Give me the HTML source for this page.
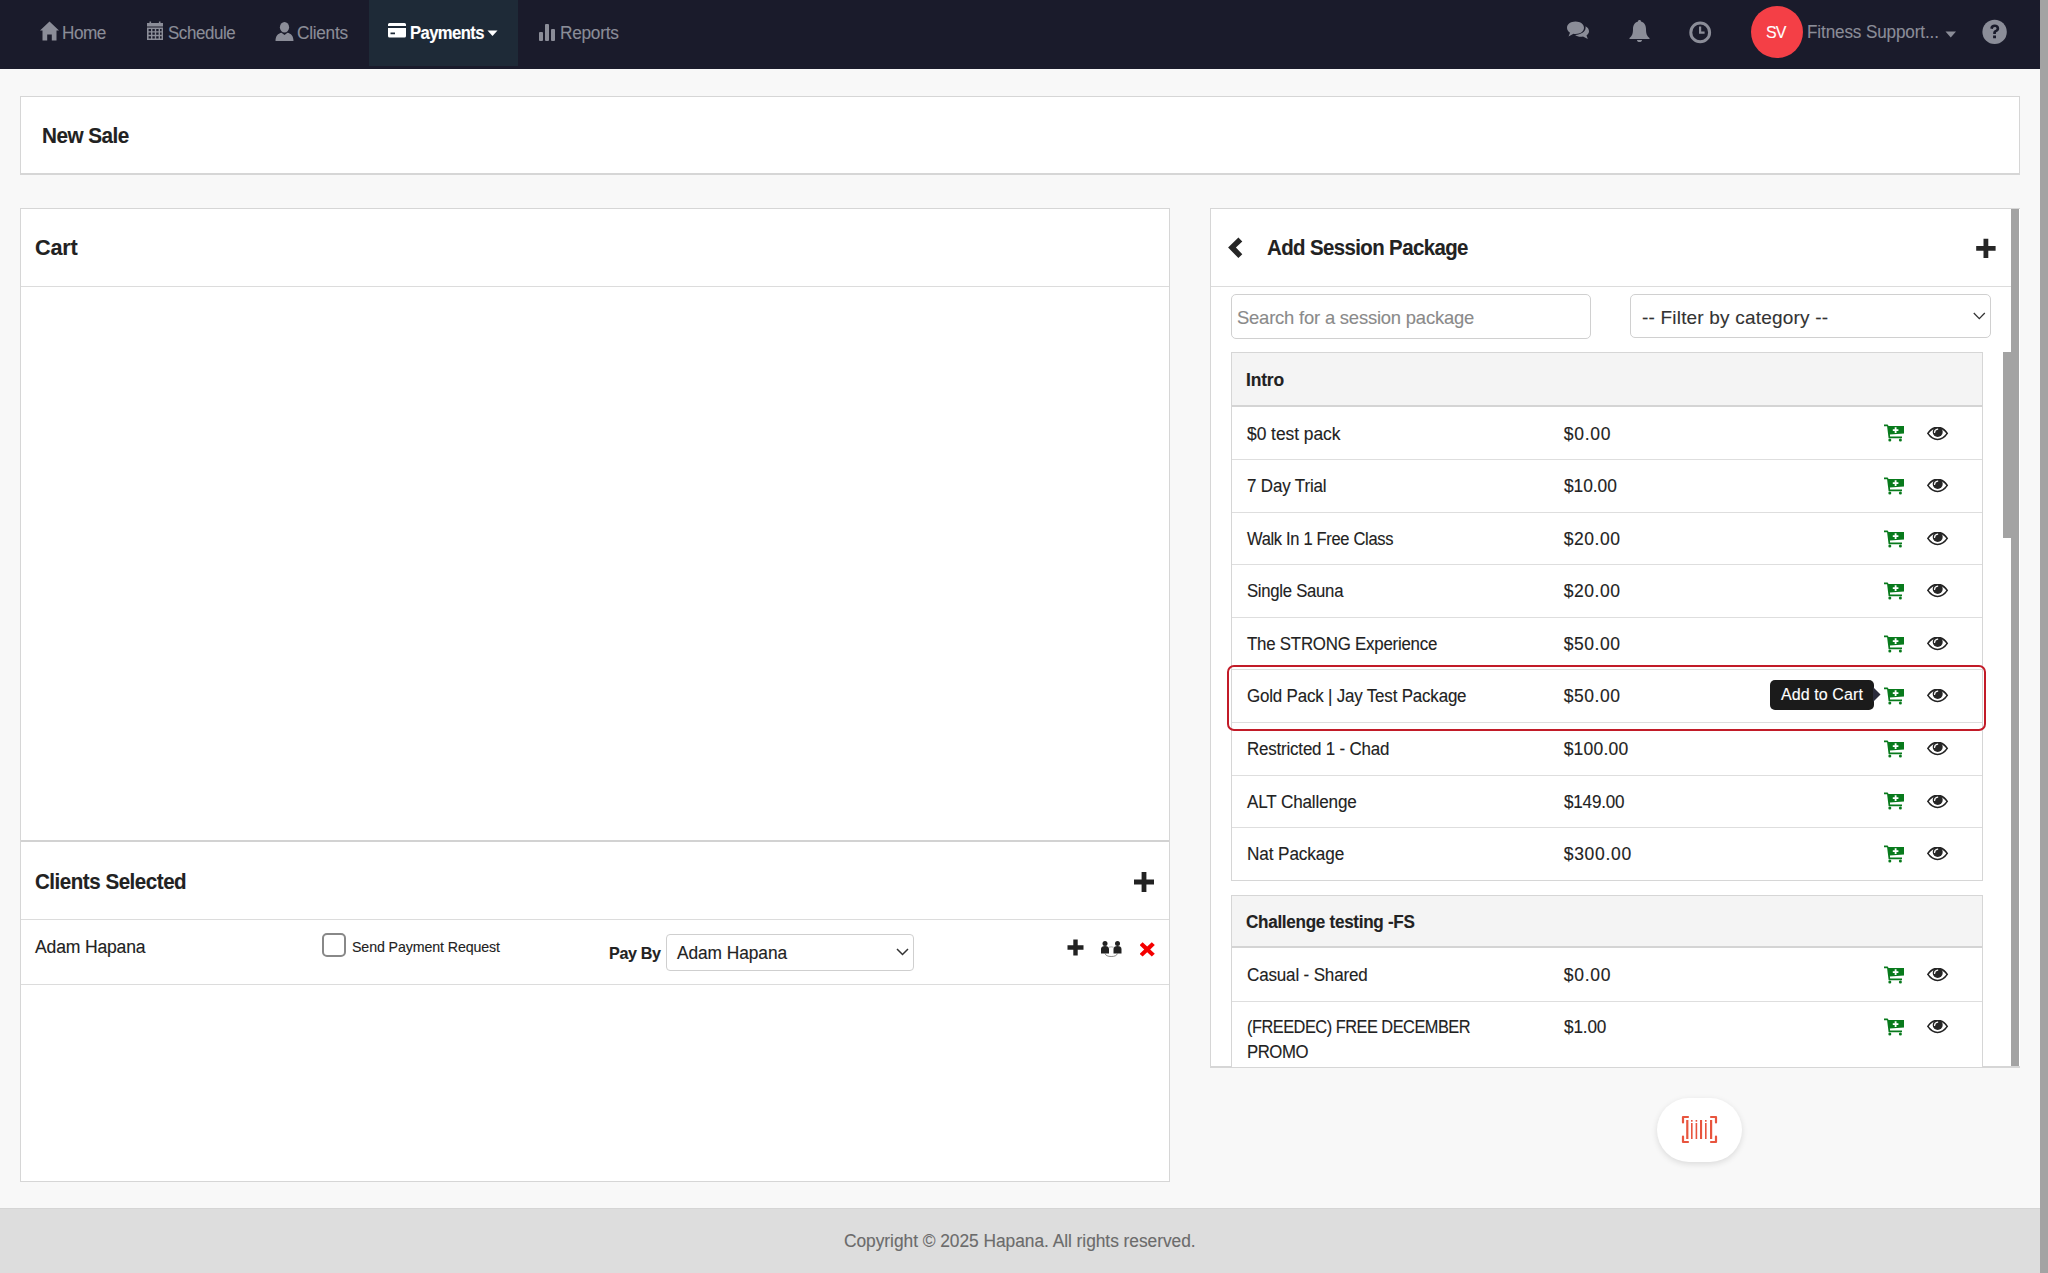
<!DOCTYPE html>
<html><head><meta charset="utf-8">
<style>
*{box-sizing:border-box;margin:0;padding:0}
html,body{width:2048px;height:1273px;overflow:hidden;background:#f8f8f8;font-family:"Liberation Sans",sans-serif;color:#222;position:relative}
.b{position:absolute;display:block}
.t{position:absolute;white-space:nowrap;transform-origin:0 0;-webkit-text-stroke:0.12px currentColor}
</style></head><body>
<div class="b" style="left:0;top:0;width:2040px;height:69px;background:#1a1b2b"></div>
<div class="b" style="left:369px;top:0;width:149px;height:66px;background:#1e2a37"></div>
<svg class="b" style="left:40px;top:21px;" width="19" height="20" viewBox="0 0 19 20"><path d="M9.5 0.5 L19 9.5 L16.5 9.5 L16.5 19.5 L11.8 19.5 L11.8 13.5 L7.2 13.5 L7.2 19.5 L2.5 19.5 L2.5 9.5 L0 9.5 Z" fill="#8b8d98"/></svg>
<div class="t" style="left:61.60px;top:22.60px;font-size:18.00px;line-height:20px;color:#8b8d98;letter-spacing:-0.491px;transform:scaleX(0.9543)">Home</div>
<svg class="b" style="left:146px;top:21px;" width="18" height="20" viewBox="0 0 18 20"><rect x="1" y="2" width="16" height="3.5" fill="#8b8d98"/><rect x="3.5" y="0.5" width="1.6" height="3" fill="#8b8d98"/><rect x="12.9" y="0.5" width="1.6" height="3" fill="#8b8d98"/><path d="M1 6.5 H17 V19 H1 Z M2.6 8 v2.2 h2.4 v-2.2 z M6.4 8 v2.2 h2.4 v-2.2 z M10.2 8 v2.2 h2.4 v-2.2 z M14 8 v2.2 h1.6 v-2.2 z M2.6 11.6 v2.2 h2.4 v-2.2 z M6.4 11.6 v2.2 h2.4 v-2.2 z M10.2 11.6 v2.2 h2.4 v-2.2 z M14 11.6 v2.2 h1.6 v-2.2 z M2.6 15.2 v2.2 h2.4 v-2.2 z M6.4 15.2 v2.2 h2.4 v-2.2 z M10.2 15.2 v2.2 h2.4 v-2.2 z M14 15.2 v2.2 h1.6 v-2.2 z" fill="#8b8d98" fill-rule="evenodd"/></svg>
<div class="t" style="left:168.00px;top:22.60px;font-size:18.00px;line-height:20px;color:#8b8d98;letter-spacing:-0.436px;transform:scaleX(0.9397)">Schedule</div>
<svg class="b" style="left:275px;top:22px;" width="19" height="19" viewBox="0 0 19 19"><ellipse cx="9.5" cy="5.2" rx="4.6" ry="5.2" fill="#8b8d98"/><path d="M0.5 19 C0.5 14 3 11.5 6.5 10.8 L9.5 13 L12.5 10.8 C16 11.5 18.5 14 18.5 19 Z" fill="#8b8d98"/></svg>
<div class="t" style="left:297.00px;top:22.60px;font-size:18.00px;line-height:20px;color:#8b8d98;letter-spacing:-0.273px;transform:scaleX(0.9557)">Clients</div>
<svg class="b" style="left:388px;top:23px;" width="18" height="15" viewBox="0 0 18 15"><path d="M0 1.5 Q0 0 1.5 0 H16.5 Q18 0 18 1.5 V13 Q18 14.5 16.5 14.5 H1.5 Q0 14.5 0 13 Z M0 3 V5 H18 V3 Z M2.5 9.5 V11.2 H7 V9.5 Z" fill="#fff" fill-rule="evenodd"/></svg>
<div class="t" style="left:410.00px;top:22.60px;font-size:18.00px;line-height:20px;color:#fff;font-weight:bold;letter-spacing:-0.624px;transform:scaleX(0.9239)">Payments</div>
<svg class="b" style="left:487px;top:30px;" width="11" height="7" viewBox="0 0 11 7"><path d="M0.5 0.5 H10.5 L5.5 6 Z" fill="#fff"/></svg>
<svg class="b" style="left:538px;top:23px;" width="18" height="18" viewBox="0 0 18 18"><rect x="1" y="9" width="4" height="9" rx="1" fill="#8b8d98"/><rect x="7" y="1" width="4" height="17" rx="1" fill="#8b8d98"/><rect x="13" y="6" width="4" height="12" rx="1" fill="#8b8d98"/></svg>
<div class="t" style="left:559.60px;top:22.60px;font-size:18.00px;line-height:20px;color:#8b8d98;letter-spacing:-0.286px;transform:scaleX(0.9594)">Reports</div>
<svg class="b" style="left:1566px;top:20px;" width="25" height="21" viewBox="0 0 25 21"><path d="M9.5 1.5 C4.5 1.5 1 4.3 1 7.8 C1 9.9 2.2 11.6 4 12.7 L2.5 16.5 L7.5 13.8 C8.2 13.95 8.9 14 9.5 14 C14.5 14 18 11.3 18 7.8 C18 4.3 14.5 1.5 9.5 1.5 Z" fill="#8b8d98"/><path d="M19.5 6.3 C21.6 7.4 23 9.2 23 11.2 C23 12.9 22 14.4 20.5 15.4 L21.8 19 L17 16.5 C16.3 16.7 15.6 16.8 14.9 16.8 C12.5 16.8 10.5 16.1 9.1 15 C15 14.8 19.6 11.6 19.6 7.8 C19.6 7.3 19.6 6.8 19.5 6.3 Z" fill="#8b8d98"/></svg>
<svg class="b" style="left:1628px;top:19px;" width="23" height="24" viewBox="0 0 23 24"><path d="M11.5 1 C12.4 1 13 1.6 13 2.4 C16.3 3.1 18 6.5 18 10 C18 15 19 17 21.5 19 V20 H1.5 V19 C4 17 5 15 5 10 C5 6.5 6.7 3.1 10 2.4 C10 1.6 10.6 1 11.5 1 Z M9 21 H14 C14 22.4 12.9 23 11.5 23 C10.1 23 9 22.4 9 21 Z" fill="#8b8d98"/></svg>
<svg class="b" style="left:1688px;top:20px;" width="25" height="25" viewBox="0 0 25 25"><circle cx="12.2" cy="12.4" r="9.4" fill="none" stroke="#8b8d98" stroke-width="3"/><path d="M11 6.5 H13.2 V11.6 H16.6 V13.8 H11 Z" fill="#8b8d98"/></svg>
<div class="b" style="left:1751px;top:6px;width:52px;height:52px;border-radius:50%;background:#f43f46"></div>
<div class="t" style="left:1766.40px;top:23.40px;font-size:17.00px;line-height:19px;color:#fff;letter-spacing:-0.907px;transform:scaleX(0.9407)">SV</div>
<div class="t" style="left:1806.60px;top:22.40px;font-size:17.50px;line-height:20px;color:#8b8d98;letter-spacing:-0.124px;transform:scaleX(0.9771)">Fitness Support...</div>
<svg class="b" style="left:1945px;top:31px;" width="12" height="7" viewBox="0 0 12 7"><path d="M0.5 0.5 H11 L5.75 6.5 Z" fill="#8b8d98"/></svg>
<svg class="b" style="left:1982px;top:19px;" width="26" height="26" viewBox="0 0 26 26"><circle cx="12.6" cy="12.9" r="12.2" fill="#8b8d98"/><path d="M8.3 9.6 C8.3 7 10.2 5.6 12.7 5.6 C15.3 5.6 17.2 7.2 17.2 9.4 C17.2 11.3 16 12.2 14.6 13 C14 13.4 13.9 13.7 13.9 14.4 V15 H11.2 V14.1 C11.2 12.6 11.9 11.7 13.2 11 C14.1 10.5 14.5 10.1 14.5 9.5 C14.5 8.7 13.8 8.1 12.8 8.1 C11.7 8.1 11 8.8 11 9.9 Z M11.1 16.6 H14 V19.3 H11.1 Z" fill="#1a1b2b"/></svg>
<div class="b" style="left:2040px;top:0;width:8px;height:1273px;background:#a3a3a3"></div>
<div class="b" style="left:20px;top:96px;width:2000px;height:79px;background:#fff;border:1px solid #d6d6d6;border-width:1px 1px 2px 1px"></div>
<div class="t" style="left:41.70px;top:123.30px;font-size:22.00px;line-height:25px;color:#222;font-weight:bold;letter-spacing:-0.548px;transform:scaleX(0.9411)">New Sale</div>
<div class="b" style="left:20px;top:208px;width:1150px;height:974px;background:#fff;border:1px solid #d6d6d6"></div>
<div class="t" style="left:35.20px;top:235.20px;font-size:22.00px;line-height:25px;color:#222;font-weight:bold;letter-spacing:-0.161px;transform:scaleX(0.9835)">Cart</div>
<div class="b" style="left:21px;top:286px;width:1148px;height:1px;background:#dcdcdc"></div>
<div class="b" style="left:21px;top:840px;width:1148px;height:2px;background:#d2d2d2"></div>
<div class="t" style="left:34.60px;top:868.60px;font-size:22.00px;line-height:25px;color:#222;font-weight:bold;letter-spacing:-0.505px;transform:scaleX(0.9339)">Clients Selected</div>
<svg class="b" style="left:1134px;top:872px;" width="20" height="20" viewBox="0 0 20 20"><path d="M7.6 0 H12.4 V7.6 H20 V12.4 H12.4 V20 H7.6 V12.4 H0 V7.6 H7.6 Z" fill="#222"/></svg>
<div class="b" style="left:21px;top:919px;width:1148px;height:1px;background:#dcdcdc"></div>
<div class="t" style="left:35.20px;top:936.70px;font-size:18.00px;line-height:20px;color:#222;letter-spacing:-0.182px;transform:scaleX(0.9764)">Adam Hapana</div>
<div class="b" style="left:322px;top:933px;width:23.5px;height:24px;border:2.5px solid #888;border-radius:5px;background:#fff"></div>
<div class="t" style="left:352.00px;top:939.20px;font-size:14.50px;line-height:16px;color:#222;letter-spacing:-0.108px;transform:scaleX(0.9799)">Send Payment Request</div>
<div class="t" style="left:609.00px;top:943.60px;font-size:17.00px;line-height:19px;color:#222;font-weight:bold;letter-spacing:-0.386px;transform:scaleX(0.9494)">Pay By</div>
<div class="b" style="left:665.5px;top:934px;width:248px;height:36.5px;border:1px solid #cfcfcf;border-radius:4px;background:#fff"></div>
<div class="t" style="left:676.60px;top:942.60px;font-size:17.50px;line-height:20px;color:#222;letter-spacing:-0.072px;transform:scaleX(0.9903)">Adam Hapana</div>
<svg class="b" style="left:896px;top:948px;" width="13" height="8" viewBox="0 0 13 8"><path d="M1 1 L6.5 6.5 L12 1" fill="none" stroke="#333" stroke-width="1.5"/></svg>
<svg class="b" style="left:1067px;top:939px;" width="17" height="17" viewBox="0 0 17 17"><path d="M6.3 0.5 H10.7 V6.3 H16.5 V10.7 H10.7 V16.5 H6.3 V10.7 H0.5 V6.3 H6.3 Z" fill="#222"/></svg>
<svg class="b" style="left:1100px;top:940px;" width="23" height="18" viewBox="0 0 23 18"><circle cx="5" cy="3.6" r="2.5" fill="#222"/><circle cx="17.5" cy="3.6" r="2.5" fill="#222"/><path d="M1 13.5 V9 C1 7 2.5 6 5 6 C7.5 6 9 7 9 9 V13.5 Z" fill="#222"/><path d="M13.5 13.5 V9 C13.5 7 15 6 17.5 6 C20 6 21.5 7 21.5 9 V13.5 Z" fill="#222"/><path d="M5 13.5 Q6 16.5 11.2 16.5 Q16.5 16.5 17.5 13.5" fill="none" stroke="#555" stroke-width="0.7"/><path d="M9 7.2 Q11.2 6.5 13.5 7.2" fill="none" stroke="#777" stroke-width="0.6"/></svg>
<svg class="b" style="left:1140px;top:942px;" width="15" height="15" viewBox="0 0 15 15"><path d="M2.6 0.2 L7.2 4.5 L11.8 0.2 L14.8 3 L10.2 7.4 L14.8 11.8 L11.8 14.6 L7.2 10.3 L2.6 14.6 L-0.4 11.8 L4.2 7.4 L-0.4 3 Z" fill="#f40000"/></svg>
<div class="b" style="left:21px;top:984px;width:1148px;height:1px;background:#dcdcdc"></div>
<div class="b" style="left:1210px;top:208px;width:810px;height:860px;background:#fff;border:1px solid #d6d6d6;border-right:none;border-bottom-width:2px"></div>
<div class="b" style="left:2011px;top:209px;width:8px;height:857px;background:#a3a3a3"></div>
<svg class="b" style="left:1227px;top:236px;" width="17" height="23" viewBox="0 0 17 23"><path d="M1.1 11.6 L11.4 1.4 L15.3 5.4 L8.9 11.6 L15.3 18.3 L11.4 22 Z" fill="#262626"/></svg>
<div class="t" style="left:1266.60px;top:235.40px;font-size:22.00px;line-height:25px;color:#222;font-weight:bold;letter-spacing:-0.630px;transform:scaleX(0.9266)">Add Session Package</div>
<svg class="b" style="left:1976px;top:238px;" width="21" height="21" viewBox="0 0 21 21"><path d="M7.5 0.8 H12.3 V8 H19.6 V12.7 H12.3 V20 H7.5 V12.7 H0.2 V8 H7.5 Z" fill="#262626"/></svg>
<div class="b" style="left:1211px;top:286px;width:800px;height:1px;background:#dcdcdc"></div>
<div class="b" style="left:1231px;top:294px;width:360px;height:45px;border:1px solid #d0d0d0;border-radius:5px;background:#fff"></div>
<div class="t" style="left:1237.40px;top:306.80px;font-size:19.00px;line-height:21px;color:#8a8a8a;letter-spacing:-0.197px;transform:scaleX(0.9683)">Search for a session package</div>
<div class="b" style="left:1630px;top:294px;width:361px;height:44px;border:1px solid #d0d0d0;border-radius:5px;background:#fff"></div>
<div class="t" style="left:1642.00px;top:306.80px;font-size:19.00px;line-height:21px;color:#333;letter-spacing:0.191px">-- Filter by category --</div>
<svg class="b" style="left:1972px;top:310px;" width="15" height="10" viewBox="0 0 15 10"><path d="M1.8 3 L7.3 8.6 L12.8 3" fill="none" stroke="#333" stroke-width="1.3"/></svg>
<div class="b" style="left:2003px;top:352px;width:8px;height:186px;background:#a3a3a3"></div>
<div class="b" style="left:1231px;top:352px;width:752px;height:529px;background:#fff;border:1px solid #d6d6d6"></div>
<div class="b" style="left:1232px;top:353px;width:750px;height:52px;background:#f4f4f4"></div>
<div class="b" style="left:1232px;top:405px;width:750px;height:2px;background:#d4d4d4"></div>
<div class="t" style="left:1246.40px;top:369.60px;font-size:18.00px;line-height:20px;color:#222;font-weight:bold;letter-spacing:-0.193px;transform:scaleX(0.9712)">Intro</div>
<div class="b" style="left:1232px;top:459px;width:750px;height:1px;background:#dedede"></div>
<div class="t" style="left:1246.50px;top:423.60px;font-size:17.50px;line-height:20px;color:#222;letter-spacing:-0.033px;transform:scaleX(0.9943)">$0 test pack</div>
<div class="t" style="left:1563.70px;top:423.60px;font-size:17.50px;line-height:20px;color:#222;letter-spacing:0.775px">$0.00</div>
<svg class="b" style="left:1883.5px;top:424.4px;" width="21" height="18" viewBox="0 0 21 18"><path d="M0 0.4 H3.6 L4.6 2 H20 V9.4 L5.9 10.6 L6.1 12.4 H18 V14.2 H4.6 L3.1 2.2 H0 Z" fill="#087a1c"/><path d="M10.7 3.3 H12.5 V5.2 H14.4 V7 H12.5 V8.9 H10.7 V7 H8.8 V5.2 H10.7 Z" fill="#fff"/><circle cx="5.8" cy="15.9" r="1.5" fill="#087a1c"/><circle cx="16.4" cy="15.9" r="1.5" fill="#087a1c"/></svg>
<svg class="b" style="left:1926px;top:426.79999999999995px;" width="23" height="15" viewBox="0 0 23 15"><path d="M1.85 6.4 C4.5 2.5 8 0.35 11.55 0.35 C15.1 0.35 18.6 2.5 21.25 6.4 C18.6 10.3 15.1 12.45 11.55 12.45 C8 12.45 4.5 10.3 1.85 6.4 Z" fill="none" stroke="#222" stroke-width="1.55"/><circle cx="11.7" cy="4.9" r="5" fill="#262626"/><path d="M8.6 5.4 C8.6 3.7 9.8 2.3 11.7 2.1" fill="none" stroke="#fff" stroke-width="1.2" stroke-linecap="round"/></svg>
<div class="b" style="left:1232px;top:512px;width:750px;height:1px;background:#dedede"></div>
<div class="t" style="left:1246.50px;top:476.10px;font-size:17.50px;line-height:20px;color:#222;letter-spacing:-0.166px;transform:scaleX(0.9703)">7 Day Trial</div>
<div class="t" style="left:1563.70px;top:476.10px;font-size:17.50px;line-height:20px;color:#222;letter-spacing:-0.056px;transform:scaleX(0.9921)">$10.00</div>
<svg class="b" style="left:1883.5px;top:476.9px;" width="21" height="18" viewBox="0 0 21 18"><path d="M0 0.4 H3.6 L4.6 2 H20 V9.4 L5.9 10.6 L6.1 12.4 H18 V14.2 H4.6 L3.1 2.2 H0 Z" fill="#087a1c"/><path d="M10.7 3.3 H12.5 V5.2 H14.4 V7 H12.5 V8.9 H10.7 V7 H8.8 V5.2 H10.7 Z" fill="#fff"/><circle cx="5.8" cy="15.9" r="1.5" fill="#087a1c"/><circle cx="16.4" cy="15.9" r="1.5" fill="#087a1c"/></svg>
<svg class="b" style="left:1926px;top:479.29999999999995px;" width="23" height="15" viewBox="0 0 23 15"><path d="M1.85 6.4 C4.5 2.5 8 0.35 11.55 0.35 C15.1 0.35 18.6 2.5 21.25 6.4 C18.6 10.3 15.1 12.45 11.55 12.45 C8 12.45 4.5 10.3 1.85 6.4 Z" fill="none" stroke="#222" stroke-width="1.55"/><circle cx="11.7" cy="4.9" r="5" fill="#262626"/><path d="M8.6 5.4 C8.6 3.7 9.8 2.3 11.7 2.1" fill="none" stroke="#fff" stroke-width="1.2" stroke-linecap="round"/></svg>
<div class="b" style="left:1232px;top:564px;width:750px;height:1px;background:#dedede"></div>
<div class="t" style="left:1246.50px;top:528.70px;font-size:17.50px;line-height:20px;color:#222;letter-spacing:-0.332px;transform:scaleX(0.9421)">Walk In 1 Free Class</div>
<div class="t" style="left:1563.70px;top:528.70px;font-size:17.50px;line-height:20px;color:#222;letter-spacing:0.560px">$20.00</div>
<svg class="b" style="left:1883.5px;top:529.5px;" width="21" height="18" viewBox="0 0 21 18"><path d="M0 0.4 H3.6 L4.6 2 H20 V9.4 L5.9 10.6 L6.1 12.4 H18 V14.2 H4.6 L3.1 2.2 H0 Z" fill="#087a1c"/><path d="M10.7 3.3 H12.5 V5.2 H14.4 V7 H12.5 V8.9 H10.7 V7 H8.8 V5.2 H10.7 Z" fill="#fff"/><circle cx="5.8" cy="15.9" r="1.5" fill="#087a1c"/><circle cx="16.4" cy="15.9" r="1.5" fill="#087a1c"/></svg>
<svg class="b" style="left:1926px;top:531.9px;" width="23" height="15" viewBox="0 0 23 15"><path d="M1.85 6.4 C4.5 2.5 8 0.35 11.55 0.35 C15.1 0.35 18.6 2.5 21.25 6.4 C18.6 10.3 15.1 12.45 11.55 12.45 C8 12.45 4.5 10.3 1.85 6.4 Z" fill="none" stroke="#222" stroke-width="1.55"/><circle cx="11.7" cy="4.9" r="5" fill="#262626"/><path d="M8.6 5.4 C8.6 3.7 9.8 2.3 11.7 2.1" fill="none" stroke="#fff" stroke-width="1.2" stroke-linecap="round"/></svg>
<div class="b" style="left:1232px;top:617px;width:750px;height:1px;background:#dedede"></div>
<div class="t" style="left:1246.50px;top:581.20px;font-size:17.50px;line-height:20px;color:#222;letter-spacing:-0.286px;transform:scaleX(0.9550)">Single Sauna</div>
<div class="t" style="left:1563.70px;top:581.20px;font-size:17.50px;line-height:20px;color:#222;letter-spacing:0.560px">$20.00</div>
<svg class="b" style="left:1883.5px;top:582.0px;" width="21" height="18" viewBox="0 0 21 18"><path d="M0 0.4 H3.6 L4.6 2 H20 V9.4 L5.9 10.6 L6.1 12.4 H18 V14.2 H4.6 L3.1 2.2 H0 Z" fill="#087a1c"/><path d="M10.7 3.3 H12.5 V5.2 H14.4 V7 H12.5 V8.9 H10.7 V7 H8.8 V5.2 H10.7 Z" fill="#fff"/><circle cx="5.8" cy="15.9" r="1.5" fill="#087a1c"/><circle cx="16.4" cy="15.9" r="1.5" fill="#087a1c"/></svg>
<svg class="b" style="left:1926px;top:584.4px;" width="23" height="15" viewBox="0 0 23 15"><path d="M1.85 6.4 C4.5 2.5 8 0.35 11.55 0.35 C15.1 0.35 18.6 2.5 21.25 6.4 C18.6 10.3 15.1 12.45 11.55 12.45 C8 12.45 4.5 10.3 1.85 6.4 Z" fill="none" stroke="#222" stroke-width="1.55"/><circle cx="11.7" cy="4.9" r="5" fill="#262626"/><path d="M8.6 5.4 C8.6 3.7 9.8 2.3 11.7 2.1" fill="none" stroke="#fff" stroke-width="1.2" stroke-linecap="round"/></svg>
<div class="b" style="left:1232px;top:669px;width:750px;height:1px;background:#dedede"></div>
<div class="t" style="left:1246.50px;top:633.70px;font-size:17.50px;line-height:20px;color:#222;letter-spacing:-0.244px;transform:scaleX(0.9640)">The STRONG Experience</div>
<div class="t" style="left:1563.70px;top:633.70px;font-size:17.50px;line-height:20px;color:#222;letter-spacing:0.560px">$50.00</div>
<svg class="b" style="left:1883.5px;top:634.5px;" width="21" height="18" viewBox="0 0 21 18"><path d="M0 0.4 H3.6 L4.6 2 H20 V9.4 L5.9 10.6 L6.1 12.4 H18 V14.2 H4.6 L3.1 2.2 H0 Z" fill="#087a1c"/><path d="M10.7 3.3 H12.5 V5.2 H14.4 V7 H12.5 V8.9 H10.7 V7 H8.8 V5.2 H10.7 Z" fill="#fff"/><circle cx="5.8" cy="15.9" r="1.5" fill="#087a1c"/><circle cx="16.4" cy="15.9" r="1.5" fill="#087a1c"/></svg>
<svg class="b" style="left:1926px;top:636.9px;" width="23" height="15" viewBox="0 0 23 15"><path d="M1.85 6.4 C4.5 2.5 8 0.35 11.55 0.35 C15.1 0.35 18.6 2.5 21.25 6.4 C18.6 10.3 15.1 12.45 11.55 12.45 C8 12.45 4.5 10.3 1.85 6.4 Z" fill="none" stroke="#222" stroke-width="1.55"/><circle cx="11.7" cy="4.9" r="5" fill="#262626"/><path d="M8.6 5.4 C8.6 3.7 9.8 2.3 11.7 2.1" fill="none" stroke="#fff" stroke-width="1.2" stroke-linecap="round"/></svg>
<div class="b" style="left:1232px;top:722px;width:750px;height:1px;background:#dedede"></div>
<div class="t" style="left:1246.50px;top:686.20px;font-size:17.50px;line-height:20px;color:#222;letter-spacing:-0.185px;transform:scaleX(0.9678)">Gold Pack | Jay Test Package</div>
<div class="t" style="left:1563.70px;top:686.20px;font-size:17.50px;line-height:20px;color:#222;letter-spacing:0.560px">$50.00</div>
<svg class="b" style="left:1883.5px;top:687.0px;" width="21" height="18" viewBox="0 0 21 18"><path d="M0 0.4 H3.6 L4.6 2 H20 V9.4 L5.9 10.6 L6.1 12.4 H18 V14.2 H4.6 L3.1 2.2 H0 Z" fill="#087a1c"/><path d="M10.7 3.3 H12.5 V5.2 H14.4 V7 H12.5 V8.9 H10.7 V7 H8.8 V5.2 H10.7 Z" fill="#fff"/><circle cx="5.8" cy="15.9" r="1.5" fill="#087a1c"/><circle cx="16.4" cy="15.9" r="1.5" fill="#087a1c"/></svg>
<svg class="b" style="left:1926px;top:689.4px;" width="23" height="15" viewBox="0 0 23 15"><path d="M1.85 6.4 C4.5 2.5 8 0.35 11.55 0.35 C15.1 0.35 18.6 2.5 21.25 6.4 C18.6 10.3 15.1 12.45 11.55 12.45 C8 12.45 4.5 10.3 1.85 6.4 Z" fill="none" stroke="#222" stroke-width="1.55"/><circle cx="11.7" cy="4.9" r="5" fill="#262626"/><path d="M8.6 5.4 C8.6 3.7 9.8 2.3 11.7 2.1" fill="none" stroke="#fff" stroke-width="1.2" stroke-linecap="round"/></svg>
<div class="b" style="left:1232px;top:775px;width:750px;height:1px;background:#dedede"></div>
<div class="t" style="left:1246.50px;top:738.90px;font-size:17.50px;line-height:20px;color:#222;letter-spacing:-0.188px;transform:scaleX(0.9666)">Restricted 1 - Chad</div>
<div class="t" style="left:1563.70px;top:738.90px;font-size:17.50px;line-height:20px;color:#222;letter-spacing:0.200px">$100.00</div>
<svg class="b" style="left:1883.5px;top:739.7px;" width="21" height="18" viewBox="0 0 21 18"><path d="M0 0.4 H3.6 L4.6 2 H20 V9.4 L5.9 10.6 L6.1 12.4 H18 V14.2 H4.6 L3.1 2.2 H0 Z" fill="#087a1c"/><path d="M10.7 3.3 H12.5 V5.2 H14.4 V7 H12.5 V8.9 H10.7 V7 H8.8 V5.2 H10.7 Z" fill="#fff"/><circle cx="5.8" cy="15.9" r="1.5" fill="#087a1c"/><circle cx="16.4" cy="15.9" r="1.5" fill="#087a1c"/></svg>
<svg class="b" style="left:1926px;top:742.1px;" width="23" height="15" viewBox="0 0 23 15"><path d="M1.85 6.4 C4.5 2.5 8 0.35 11.55 0.35 C15.1 0.35 18.6 2.5 21.25 6.4 C18.6 10.3 15.1 12.45 11.55 12.45 C8 12.45 4.5 10.3 1.85 6.4 Z" fill="none" stroke="#222" stroke-width="1.55"/><circle cx="11.7" cy="4.9" r="5" fill="#262626"/><path d="M8.6 5.4 C8.6 3.7 9.8 2.3 11.7 2.1" fill="none" stroke="#fff" stroke-width="1.2" stroke-linecap="round"/></svg>
<div class="b" style="left:1232px;top:827px;width:750px;height:1px;background:#dedede"></div>
<div class="t" style="left:1246.50px;top:791.50px;font-size:17.50px;line-height:20px;color:#222;letter-spacing:-0.148px;transform:scaleX(0.9767)">ALT Challenge</div>
<div class="t" style="left:1563.70px;top:791.50px;font-size:17.50px;line-height:20px;color:#222;letter-spacing:-0.182px;transform:scaleX(0.9742)">$149.00</div>
<svg class="b" style="left:1883.5px;top:792.3px;" width="21" height="18" viewBox="0 0 21 18"><path d="M0 0.4 H3.6 L4.6 2 H20 V9.4 L5.9 10.6 L6.1 12.4 H18 V14.2 H4.6 L3.1 2.2 H0 Z" fill="#087a1c"/><path d="M10.7 3.3 H12.5 V5.2 H14.4 V7 H12.5 V8.9 H10.7 V7 H8.8 V5.2 H10.7 Z" fill="#fff"/><circle cx="5.8" cy="15.9" r="1.5" fill="#087a1c"/><circle cx="16.4" cy="15.9" r="1.5" fill="#087a1c"/></svg>
<svg class="b" style="left:1926px;top:794.6999999999999px;" width="23" height="15" viewBox="0 0 23 15"><path d="M1.85 6.4 C4.5 2.5 8 0.35 11.55 0.35 C15.1 0.35 18.6 2.5 21.25 6.4 C18.6 10.3 15.1 12.45 11.55 12.45 C8 12.45 4.5 10.3 1.85 6.4 Z" fill="none" stroke="#222" stroke-width="1.55"/><circle cx="11.7" cy="4.9" r="5" fill="#262626"/><path d="M8.6 5.4 C8.6 3.7 9.8 2.3 11.7 2.1" fill="none" stroke="#fff" stroke-width="1.2" stroke-linecap="round"/></svg>
<div class="t" style="left:1246.50px;top:844.00px;font-size:17.50px;line-height:20px;color:#222;letter-spacing:-0.117px;transform:scaleX(0.9825)">Nat Package</div>
<div class="t" style="left:1563.70px;top:844.00px;font-size:17.50px;line-height:20px;color:#222;letter-spacing:0.717px">$300.00</div>
<svg class="b" style="left:1883.5px;top:844.8px;" width="21" height="18" viewBox="0 0 21 18"><path d="M0 0.4 H3.6 L4.6 2 H20 V9.4 L5.9 10.6 L6.1 12.4 H18 V14.2 H4.6 L3.1 2.2 H0 Z" fill="#087a1c"/><path d="M10.7 3.3 H12.5 V5.2 H14.4 V7 H12.5 V8.9 H10.7 V7 H8.8 V5.2 H10.7 Z" fill="#fff"/><circle cx="5.8" cy="15.9" r="1.5" fill="#087a1c"/><circle cx="16.4" cy="15.9" r="1.5" fill="#087a1c"/></svg>
<svg class="b" style="left:1926px;top:847.1999999999999px;" width="23" height="15" viewBox="0 0 23 15"><path d="M1.85 6.4 C4.5 2.5 8 0.35 11.55 0.35 C15.1 0.35 18.6 2.5 21.25 6.4 C18.6 10.3 15.1 12.45 11.55 12.45 C8 12.45 4.5 10.3 1.85 6.4 Z" fill="none" stroke="#222" stroke-width="1.55"/><circle cx="11.7" cy="4.9" r="5" fill="#262626"/><path d="M8.6 5.4 C8.6 3.7 9.8 2.3 11.7 2.1" fill="none" stroke="#fff" stroke-width="1.2" stroke-linecap="round"/></svg>
<div class="b" style="left:1231px;top:895px;width:752px;height:172px;background:#fff;border:1px solid #d6d6d6;border-bottom:none"></div>
<div class="b" style="left:1232px;top:896px;width:750px;height:50px;background:#f4f4f4"></div>
<div class="b" style="left:1232px;top:946px;width:750px;height:2px;background:#d4d4d4"></div>
<div class="t" style="left:1246.40px;top:912.20px;font-size:18.00px;line-height:20px;color:#222;font-weight:bold;letter-spacing:-0.310px;transform:scaleX(0.9499)">Challenge testing -FS</div>
<div class="b" style="left:1232px;top:1001px;width:750px;height:1px;background:#dedede"></div>
<div class="t" style="left:1246.50px;top:965.40px;font-size:17.50px;line-height:20px;color:#222;letter-spacing:-0.165px;transform:scaleX(0.9727)">Casual - Shared</div>
<div class="t" style="left:1563.70px;top:965.40px;font-size:17.50px;line-height:20px;color:#222;letter-spacing:0.775px">$0.00</div>
<svg class="b" style="left:1883.5px;top:966px;" width="21" height="18" viewBox="0 0 21 18"><path d="M0 0.4 H3.6 L4.6 2 H20 V9.4 L5.9 10.6 L6.1 12.4 H18 V14.2 H4.6 L3.1 2.2 H0 Z" fill="#087a1c"/><path d="M10.7 3.3 H12.5 V5.2 H14.4 V7 H12.5 V8.9 H10.7 V7 H8.8 V5.2 H10.7 Z" fill="#fff"/><circle cx="5.8" cy="15.9" r="1.5" fill="#087a1c"/><circle cx="16.4" cy="15.9" r="1.5" fill="#087a1c"/></svg>
<svg class="b" style="left:1926px;top:968px;" width="23" height="15" viewBox="0 0 23 15"><path d="M1.85 6.4 C4.5 2.5 8 0.35 11.55 0.35 C15.1 0.35 18.6 2.5 21.25 6.4 C18.6 10.3 15.1 12.45 11.55 12.45 C8 12.45 4.5 10.3 1.85 6.4 Z" fill="none" stroke="#222" stroke-width="1.55"/><circle cx="11.7" cy="4.9" r="5" fill="#262626"/><path d="M8.6 5.4 C8.6 3.7 9.8 2.3 11.7 2.1" fill="none" stroke="#fff" stroke-width="1.2" stroke-linecap="round"/></svg>
<div class="t" style="left:1246.50px;top:1017.40px;font-size:17.50px;line-height:20px;color:#222;letter-spacing:-0.514px;transform:scaleX(0.9332)">(FREEDEC) FREE DECEMBER</div>
<div class="t" style="left:1246.50px;top:1042.00px;font-size:17.50px;line-height:20px;color:#222;letter-spacing:-0.480px;transform:scaleX(0.9567)">PROMO</div>
<div class="t" style="left:1563.70px;top:1017.40px;font-size:17.50px;line-height:20px;color:#222;letter-spacing:-0.152px;transform:scaleX(0.9793)">$1.00</div>
<svg class="b" style="left:1883.5px;top:1018px;" width="21" height="18" viewBox="0 0 21 18"><path d="M0 0.4 H3.6 L4.6 2 H20 V9.4 L5.9 10.6 L6.1 12.4 H18 V14.2 H4.6 L3.1 2.2 H0 Z" fill="#087a1c"/><path d="M10.7 3.3 H12.5 V5.2 H14.4 V7 H12.5 V8.9 H10.7 V7 H8.8 V5.2 H10.7 Z" fill="#fff"/><circle cx="5.8" cy="15.9" r="1.5" fill="#087a1c"/><circle cx="16.4" cy="15.9" r="1.5" fill="#087a1c"/></svg>
<svg class="b" style="left:1926px;top:1020px;" width="23" height="15" viewBox="0 0 23 15"><path d="M1.85 6.4 C4.5 2.5 8 0.35 11.55 0.35 C15.1 0.35 18.6 2.5 21.25 6.4 C18.6 10.3 15.1 12.45 11.55 12.45 C8 12.45 4.5 10.3 1.85 6.4 Z" fill="none" stroke="#222" stroke-width="1.55"/><circle cx="11.7" cy="4.9" r="5" fill="#262626"/><path d="M8.6 5.4 C8.6 3.7 9.8 2.3 11.7 2.1" fill="none" stroke="#fff" stroke-width="1.2" stroke-linecap="round"/></svg>
<div class="b" style="left:1227px;top:665px;width:759px;height:65.5px;border:2.8px solid #c21b28;border-radius:7px"></div>
<div class="b" style="left:1770px;top:680px;width:104px;height:30px;background:#1b1b1b;border-radius:5px"></div>
<svg class="b" style="left:1873px;top:687px;" width="8" height="15" viewBox="0 0 8 15"><path d="M0 0 L7.5 7.5 L0 15 Z" fill="#2b2c3b"/></svg>
<div class="t" style="left:1780.90px;top:686.40px;font-size:16.00px;line-height:17px;color:#fff;letter-spacing:0.110px">Add to Cart</div>
<div class="b" style="left:1657px;top:1098px;width:85px;height:64px;border-radius:32px;background:#fff;box-shadow:0 2px 6px rgba(0,0,0,0.12)"></div>
<svg class="b" style="left:1681px;top:1115px;" width="37" height="29" viewBox="0 0 37 29"><g fill="none" stroke="#e8553e" stroke-width="2.2" stroke-linecap="round" stroke-linejoin="round"><path d="M2 7.5 V2 H7"/><path d="M30 2 H35 V7.5"/><path d="M2 21.5 V27 H7"/><path d="M30 27 H35 V21.5"/></g><rect x="5.2" y="5" width="2.2" height="19" fill="#e8553e"/><rect x="10" y="8" width="1.6" height="16" fill="#e8553e"/><rect x="10" y="5" width="1.6" height="1.7" fill="#e8553e"/><rect x="14.6" y="8" width="1.6" height="16" fill="#e8553e"/><rect x="14.6" y="5" width="1.6" height="1.7" fill="#e8553e"/><rect x="19" y="5" width="2.1" height="19" fill="#e8553e"/><rect x="24" y="8" width="1.6" height="16" fill="#e8553e"/><rect x="24" y="5" width="1.6" height="1.7" fill="#e8553e"/><rect x="29" y="5" width="2.2" height="19" fill="#e8553e"/></svg>
<div class="b" style="left:0;top:1208px;width:2040px;height:65px;background:#dddddd;border-top:1px solid #d5d5d5"></div>
<div class="t" style="left:843.90px;top:1231.00px;font-size:17.50px;line-height:20px;color:#6b6b6b;letter-spacing:-0.043px;transform:scaleX(0.9921)">Copyright © 2025 Hapana. All rights reserved.</div>
</body></html>
